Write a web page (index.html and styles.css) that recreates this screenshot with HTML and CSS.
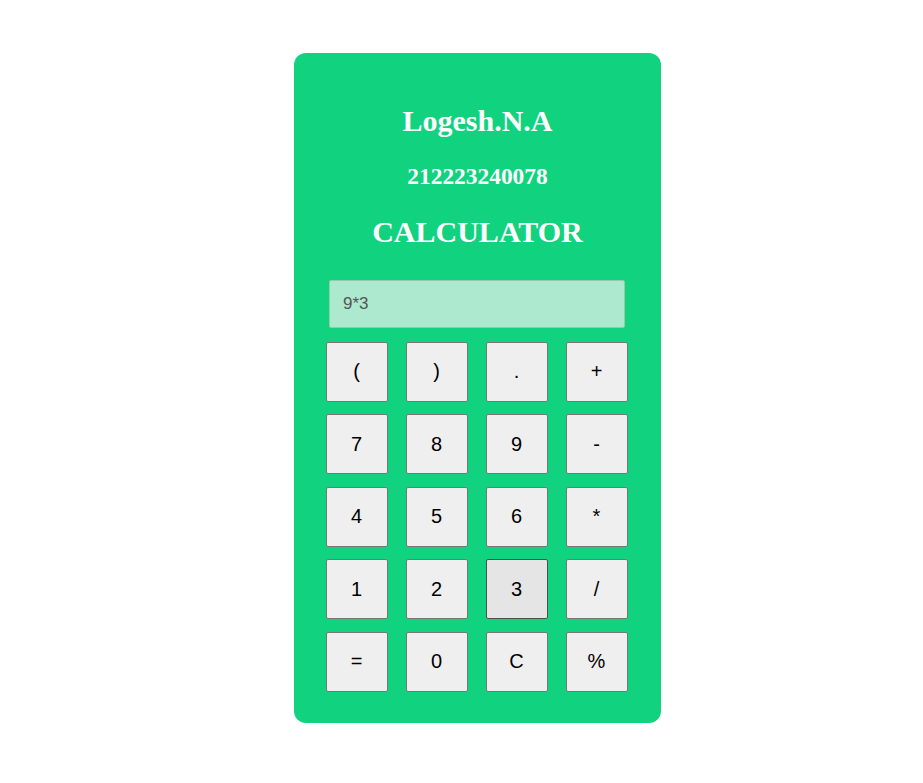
FILE: index.html
```html
<!DOCTYPE html>
<html>
<head>
<meta charset="utf-8">
<title>Calculator</title>
<link rel="stylesheet" href="styles.css">
</head>
<body>
<div class="card">
  <h1 class="name">Logesh.N.A</h1>
  <h2 class="roll">212223240078</h2>
  <h1 class="title">CALCULATOR</h1>
  <input class="display" type="text" value="9*3">
  <div class="keys">
    <button class="key">(</button>
    <button class="key">)</button>
    <button class="key">.</button>
    <button class="key">+</button>
    <button class="key">7</button>
    <button class="key">8</button>
    <button class="key">9</button>
    <button class="key">-</button>
    <button class="key">4</button>
    <button class="key">5</button>
    <button class="key">6</button>
    <button class="key">*</button>
    <button class="key">1</button>
    <button class="key">2</button>
    <button class="key key-hover">3</button>
    <button class="key">/</button>
    <button class="key">=</button>
    <button class="key">0</button>
    <button class="key">C</button>
    <button class="key">%</button>
  </div>
</div>
</body>
</html>
```

FILE: styles.css
```css
html, body {
  margin: 0;
  padding: 0;
  background: #ffffff;
}

body {
  padding: 53px 0 0 294px;
  font-family: "Liberation Serif", "Times New Roman", serif;
}

.card {
  width: 367px;
  height: 670px;
  box-sizing: border-box;
  background: #11d27e;
  border-radius: 12px;
  padding-top: 50px;
  display: flex;
  flex-direction: column;
  align-items: center;
}

.name, .roll, .title {
  margin: 0;
  color: #ffffff;
  font-weight: bold;
  text-align: center;
}

.name {
  font-size: 30px;
  line-height: 36px;
}

.roll {
  font-size: 23.4px;
  line-height: 28px;
  margin-top: 23px;
}

.title {
  font-size: 30px;
  line-height: 36px;
  margin-top: 23.6px;
}

.display {
  margin: 30.4px 1px 0 0;
  width: 296px;
  height: 48px;
  box-sizing: border-box;
  padding: 0 0 0 13px;
  border: 1px solid #95c9b0;
  border-radius: 2px;
  background: #ade9cf;
  font-family: "Liberation Sans", Arial, sans-serif;
  font-size: 17px;
  color: #555555;
  outline: none;
}

.keys {
  margin: 14px 2px 0 0;
  display: grid;
  grid-template-columns: repeat(4, 62px);
  grid-auto-rows: 60px;
  column-gap: 18px;
  row-gap: 12.5px;
}

.key {
  margin: 0;
  padding: 0;
  box-sizing: border-box;
  background: #efefef;
  border: 1px solid #767676;
  border-radius: 2px;
  font-family: "Liberation Sans", Arial, sans-serif;
  font-size: 20px;
  color: #000000;
}

.key-hover {
  background: #e5e5e5;
  border-color: #4f4f4f;
}
```
